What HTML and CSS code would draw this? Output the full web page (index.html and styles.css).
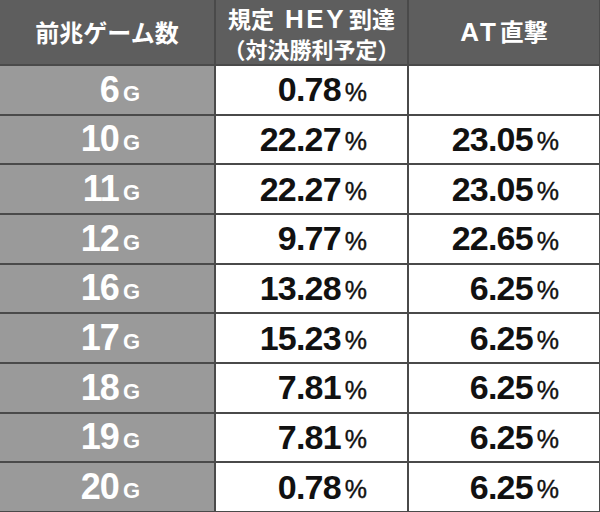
FILE: index.html
```html
<!DOCTYPE html>
<html lang="ja">
<head>
<meta charset="utf-8">
<link rel="stylesheet" href="styles.css">
</head>
<body>
<div class="table">
  <div class="th">前兆ゲーム数</div>
  <div class="th two"><span class="l1">規定<span class="lat hey">HEY</span>到達</span><span>（対決勝利予定）</span></div>
  <div class="th"><span><span class="lat at">A</span><span class="lat at-t">T</span>直撃</span></div>

  <div class="g">6<small>G</small></div><div class="v">0.78<small>%</small></div><div class="v"></div>
  <div class="g">10<small>G</small></div><div class="v">22.27<small>%</small></div><div class="v">23.05<small>%</small></div>
  <div class="g">11<small>G</small></div><div class="v">22.27<small>%</small></div><div class="v">23.05<small>%</small></div>
  <div class="g">12<small>G</small></div><div class="v">9.77<small>%</small></div><div class="v">22.65<small>%</small></div>
  <div class="g">16<small>G</small></div><div class="v">13.28<small>%</small></div><div class="v">6.25<small>%</small></div>
  <div class="g">17<small>G</small></div><div class="v">15.23<small>%</small></div><div class="v">6.25<small>%</small></div>
  <div class="g">18<small>G</small></div><div class="v">7.81<small>%</small></div><div class="v">6.25<small>%</small></div>
  <div class="g">19<small>G</small></div><div class="v">7.81<small>%</small></div><div class="v">6.25<small>%</small></div>
  <div class="g">20<small>G</small></div><div class="v">0.78<small>%</small></div><div class="v">6.25<small>%</small></div>
</div>
</body>
</html>
```
FILE: styles.css
```css
html, body {
  margin: 0;
  padding: 0;
  background: #ffffff;
}
.table {
  width: 600px;
  height: 512px;
  box-sizing: border-box;
  display: grid;
  grid-template-columns: 214px 191px 1fr;
  grid-template-rows: 64px repeat(9, 1fr);
  gap: 2px;
  padding: 0 1px 1px 0;
  background: #4a4a4a;
}
.th {
  background: #5e5e5e;
  color: #ffffff;
  font-family: "Noto Sans CJK JP", sans-serif;
  font-weight: 700;
  font-size: 24px;
  display: flex;
  align-items: center;
  justify-content: center;
  line-height: 1;
}
.th.two {
  flex-direction: column;
  font-size: 22px;
  gap: 5px;
  padding-top: 1px;
}
.th .l1 {
  font-size: 23px;
}
.th .lat {
  font-family: "Liberation Sans", sans-serif;
  font-weight: 700;
}
.th .hey {
  font-size: 26px;
  letter-spacing: 2.5px;
  margin: 0 3px 0 11px;
}
.th .at {
  font-size: 26px;
  margin-right: 1px;
}
.th .at-t {
  font-size: 26px;
  margin-right: 4px;
}
.g {
  background: #9a9a9a;
  color: #ffffff;
  font-family: "Liberation Sans", Arial, sans-serif;
  font-weight: 700;
  font-size: 36px;
  display: flex;
  align-items: center;
  justify-content: flex-end;
  padding-right: 74px;
  letter-spacing: -1px;
}
.g small {
  font-size: 22px;
  margin-left: 4px;
  margin-top: 8px;
  letter-spacing: 0;
}
.v {
  background: #ffffff;
  color: #111111;
  font-family: "Liberation Sans", Arial, sans-serif;
  font-weight: 700;
  font-size: 34px;
  display: flex;
  align-items: center;
  justify-content: flex-end;
  padding-right: 40px;
  letter-spacing: -0.8px;
}
.v small {
  font-size: 25px;
  font-weight: 400;
  margin-left: 4px;
  margin-top: 5px;
  letter-spacing: 0;
  -webkit-text-stroke: 0.4px #111111;
}
```
